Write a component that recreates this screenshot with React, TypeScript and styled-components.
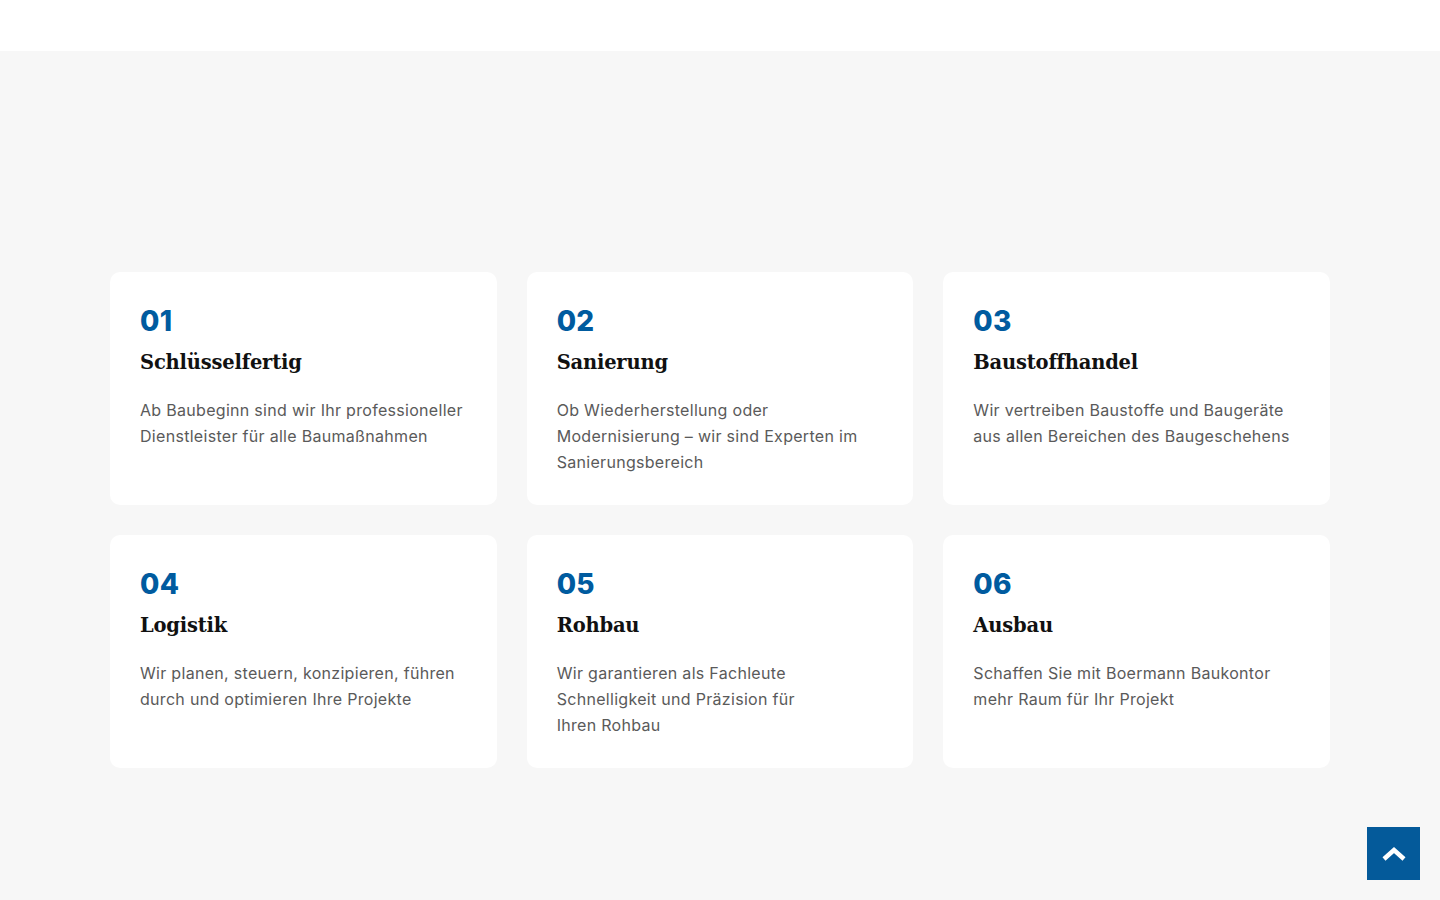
import React from "react";
import styled, { createGlobalStyle } from "styled-components";

const GlobalStyle = createGlobalStyle`
  html, body {
    margin: 0;
    padding: 0;
    background: #f7f7f7;
  }
  * { box-sizing: border-box; }
`;

const TopBar = styled.header`
  height: 51px;
  background: #ffffff;
`;

const Section = styled.section`
  background: #f7f7f7;
  min-height: 849px;
  padding: 221px 110px 80px;
`;

const Grid = styled.div`
  display: grid;
  grid-template-columns: repeat(3, 1fr);
  gap: 30px;
  max-width: 1220px;
  margin: 0 auto;
`;

const Card = styled.article`
  background: #ffffff;
  border-radius: 10px;
  padding: 32px 30px 30px;
  min-height: 232px;
`;

const Number = styled.div`
  font-family: Inter, "Open Sans", sans-serif;
  font-weight: 800;
  font-size: 28px;
  line-height: 34px;
  color: #005b9f;
  letter-spacing: 0.3px;
`;

const Title = styled.h3`
  margin: 10px 0 0;
  font-family: "DejaVu Serif", "Liberation Serif", serif;
  font-weight: 700;
  font-size: 19.5px;
  line-height: 30px;
  color: #111111;
  letter-spacing: -0.2px;
`;

const Text = styled.p`
  margin: 19px 0 0;
  font-family: Inter, "Open Sans", sans-serif;
  font-weight: 400;
  font-size: 16px;
  line-height: 26px;
  color: #5a5a5a;
  letter-spacing: 0.3px;
  max-width: 327px;
`;

const ToTop = styled.button`
  position: fixed;
  right: 20px;
  bottom: 20px;
  width: 53px;
  height: 53px;
  border: none;
  background: #045a9a;
  display: flex;
  align-items: center;
  justify-content: center;
  cursor: pointer;
  padding: 0;
`;

const services: { no: string; title: string; text: React.ReactNode }[] = [
  {
    no: "01",
    title: "Schlüsselfertig",
    text: "Ab Baubeginn sind wir Ihr professioneller Dienstleister für alle Baumaßnahmen",
  },
  {
    no: "02",
    title: "Sanierung",
    text: "Ob Wiederherstellung oder Modernisierung – wir sind Experten im Sanierungsbereich",
  },
  {
    no: "03",
    title: "Baustoffhandel",
    text: "Wir vertreiben Baustoffe und Baugeräte aus allen Bereichen des Baugeschehens",
  },
  {
    no: "04",
    title: "Logistik",
    text: "Wir planen, steuern, konzipieren, führen durch und optimieren Ihre Projekte",
  },
  {
    no: "05",
    title: "Rohbau",
    text: (
      <>
        Wir garantieren als Fachleute
        <br />
        Schnelligkeit und Präzision für
        <br />
        Ihren Rohbau
      </>
    ),
  },
  {
    no: "06",
    title: "Ausbau",
    text: "Schaffen Sie mit Boermann Baukontor mehr Raum für Ihr Projekt",
  },
];

export default function App() {
  return (
    <>
      <GlobalStyle />
      <TopBar />
      <Section>
        <Grid>
          {services.map((s) => (
            <Card key={s.no}>
              <Number>{s.no}</Number>
              <Title>{s.title}</Title>
              <Text>{s.text}</Text>
            </Card>
          ))}
        </Grid>
      </Section>
      <ToTop aria-label="Nach oben">
        <svg width="24" height="16" viewBox="0 0 24 16">
          <path d="M2 13 L12 4 L22 13" fill="none" stroke="#ffffff" strokeWidth="4.5" />
        </svg>
      </ToTop>
    </>
  );
}
